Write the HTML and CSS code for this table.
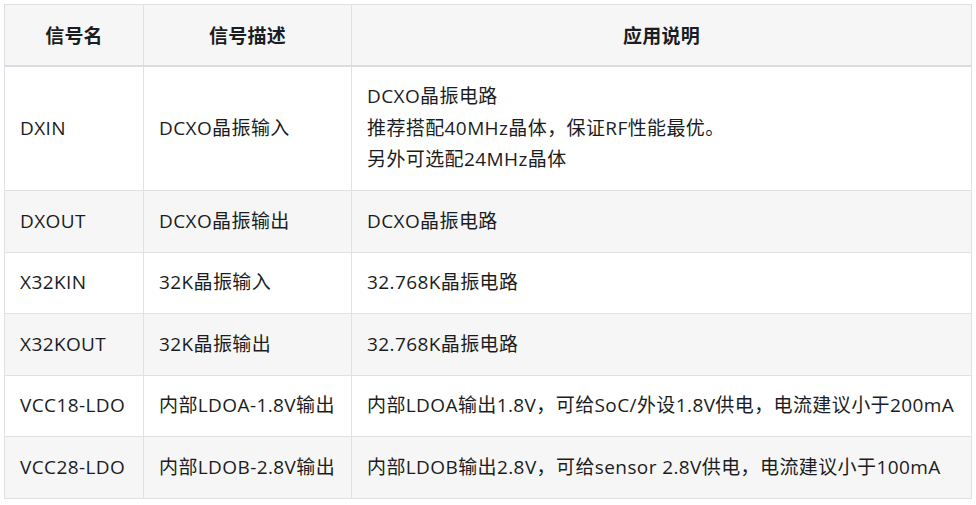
FILE: index.html
```html
<!DOCTYPE html>
<html lang="zh-CN">
<head>
<meta charset="utf-8">
<link rel="stylesheet" href="styles.css">
</head>
<body>
<table class="sig-table">
  <colgroup>
    <col class="c1"><col class="c2"><col class="c3">
  </colgroup>
  <thead>
    <tr><th>信号名</th><th>信号描述</th><th>应用说明</th></tr>
  </thead>
  <tbody>
    <tr><td>DXIN</td><td>DCXO晶振输入</td><td>DCXO晶振电路<br>推荐搭配40MHz晶体，保证RF性能最优。<br>另外可选配24MHz晶体</td></tr>
    <tr><td>DXOUT</td><td>DCXO晶振输出</td><td>DCXO晶振电路</td></tr>
    <tr><td>X32KIN</td><td>32K晶振输入</td><td>32.768K晶振电路</td></tr>
    <tr><td>X32KOUT</td><td>32K晶振输出</td><td>32.768K晶振电路</td></tr>
    <tr><td>VCC18-LDO</td><td>内部LDOA-1.8V输出</td><td>内部LDOA输出1.8V，可给SoC/外设1.8V供电，电流建议小于200mA</td></tr>
    <tr><td>VCC28-LDO</td><td>内部LDOB-2.8V输出</td><td>内部LDOB输出2.8V，可给sensor 2.8V供电，电流建议小于100mA</td></tr>
  </tbody>
</table>
</body>
</html>
```
FILE: styles.css
```css
html, body {
  margin: 0;
  padding: 0;
  background: #ffffff;
}
body {
  padding: 4px 5px 0 4px;
  font-family: "Open Sans", "Noto Sans CJK SC", sans-serif;
  font-size: 19px;
  color: #1a1d22;
}
.sig-table {
  border-collapse: collapse;
  width: 967px;
  table-layout: fixed;
}
.c1 { width: 139px; }
.c2 { width: 208px; }
.c3 { width: 620px; }
.sig-table th,
.sig-table td {
  border: 1px solid #dfe2e5;
  padding: 14px 15px;
  line-height: 31.5px;
  text-align: left;
  vertical-align: middle;
  white-space: nowrap;
  letter-spacing: 0.4px;
}
.sig-table td {
  padding-top: 14.5px;
  padding-bottom: 14.5px;
}
.sig-table th {
  background: #f6f6f6;
  font-family: "Noto Sans CJK SC", sans-serif;
  font-weight: 700;
  text-align: center;
  padding: 14px 15px;
  letter-spacing: 0.2px;
  border-bottom: 2px solid #d9dce0;
}
.sig-table tbody tr:nth-child(even) td {
  background: #f6f6f6;
}
```
